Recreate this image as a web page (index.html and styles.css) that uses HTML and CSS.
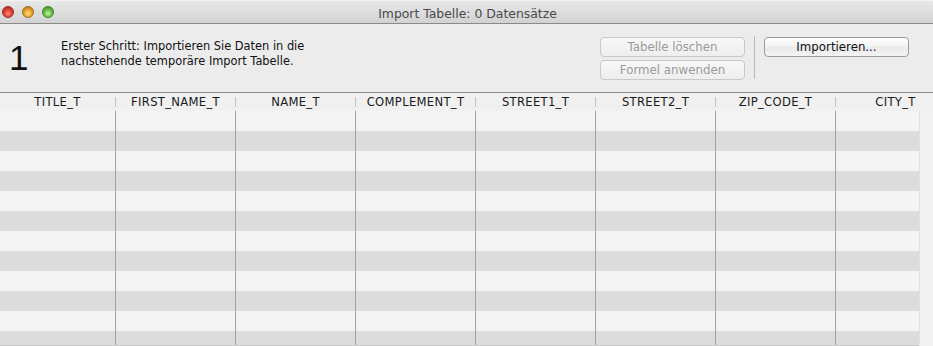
FILE: index.html
```html
<!DOCTYPE html>
<html lang="de">
<head>
<meta charset="utf-8">
<title>Import Tabelle</title>
<link rel="stylesheet" href="styles.css">
</head>
<body>
<div class="window">
  <div class="titlebar">
    <div class="lights">
      <span class="light red"></span>
      <span class="light yellow"></span>
      <span class="light green"></span>
    </div>
    <div class="title">Import Tabelle: 0 Datensätze</div>
  </div>
  <div class="toolbar">
    <div class="step">1</div>
    <div class="desc">Erster Schritt: Importieren Sie Daten in die<br>nachstehende temporäre Import Tabelle.</div>
    <div class="btncol">
      <button class="btn disabled">Tabelle löschen</button>
      <button class="btn disabled">Formel anwenden</button>
    </div>
    <div class="vsep"></div>
    <div class="btncol">
      <button class="btn">Importieren...</button>
    </div>
  </div>
  <div class="table">
    <div class="thead">
      <div class="th first">TITLE_T</div><div class="hdiv"></div>
      <div class="th">FIRST_NAME_T</div><div class="hdiv"></div>
      <div class="th">NAME_T</div><div class="hdiv"></div>
      <div class="th">COMPLEMENT_T</div><div class="hdiv"></div>
      <div class="th">STREET1_T</div><div class="hdiv"></div>
      <div class="th">STREET2_T</div><div class="hdiv"></div>
      <div class="th">ZIP_CODE_T</div><div class="hdiv"></div>
      <div class="th">CITY_T</div>
    </div>
    <div class="tbody">
      <div class="rows">
        <div class="row"><div class="td first"></div><div class="td"></div><div class="td"></div><div class="td"></div><div class="td"></div><div class="td"></div><div class="td"></div><div class="td"></div></div>
        <div class="row alt"><div class="td first"></div><div class="td"></div><div class="td"></div><div class="td"></div><div class="td"></div><div class="td"></div><div class="td"></div><div class="td"></div></div>
        <div class="row"><div class="td first"></div><div class="td"></div><div class="td"></div><div class="td"></div><div class="td"></div><div class="td"></div><div class="td"></div><div class="td"></div></div>
        <div class="row alt"><div class="td first"></div><div class="td"></div><div class="td"></div><div class="td"></div><div class="td"></div><div class="td"></div><div class="td"></div><div class="td"></div></div>
        <div class="row"><div class="td first"></div><div class="td"></div><div class="td"></div><div class="td"></div><div class="td"></div><div class="td"></div><div class="td"></div><div class="td"></div></div>
        <div class="row alt"><div class="td first"></div><div class="td"></div><div class="td"></div><div class="td"></div><div class="td"></div><div class="td"></div><div class="td"></div><div class="td"></div></div>
        <div class="row"><div class="td first"></div><div class="td"></div><div class="td"></div><div class="td"></div><div class="td"></div><div class="td"></div><div class="td"></div><div class="td"></div></div>
        <div class="row alt"><div class="td first"></div><div class="td"></div><div class="td"></div><div class="td"></div><div class="td"></div><div class="td"></div><div class="td"></div><div class="td"></div></div>
        <div class="row"><div class="td first"></div><div class="td"></div><div class="td"></div><div class="td"></div><div class="td"></div><div class="td"></div><div class="td"></div><div class="td"></div></div>
        <div class="row alt"><div class="td first"></div><div class="td"></div><div class="td"></div><div class="td"></div><div class="td"></div><div class="td"></div><div class="td"></div><div class="td"></div></div>
        <div class="row"><div class="td first"></div><div class="td"></div><div class="td"></div><div class="td"></div><div class="td"></div><div class="td"></div><div class="td"></div><div class="td"></div></div>
        <div class="row alt last"><div class="td first"></div><div class="td"></div><div class="td"></div><div class="td"></div><div class="td"></div><div class="td"></div><div class="td"></div><div class="td"></div></div>
      </div>
      <div class="vscroll"></div>
    </div>
  </div>
</div>
</body>
</html>
```
FILE: styles.css
```css
html, body {
  margin: 0;
  padding: 0;
  background: #ececec;
}
.window {
  width: 933px;
  height: 346px;
  overflow: hidden;
  font-family: "DejaVu Sans", "Liberation Sans", sans-serif;
  background: #ececec;
  display: flex;
  flex-direction: column;
}
.titlebar {
  flex: none;
  border-top: 1px solid #f2f2f2;
  border-bottom: 1px solid #8a8a8a;
  box-sizing: border-box;
  height: 24px;
  background: linear-gradient(#e8e8e8, #d2d2d2);
  display: flex;
  align-items: center;
}
.lights {
  display: flex;
  gap: 8px;
  padding-left: 2px;
  width: 0;
}
.light {
  flex: none;
  width: 12px;
  height: 12px;
  border-radius: 50%;
  box-sizing: border-box;
}
.red {
  background: radial-gradient(circle at 50% 65%, #ff8a80 0%, #e0443a 45%, #a81c14 100%);
  border: 1px solid #9b2a24;
}
.yellow {
  background: radial-gradient(circle at 50% 65%, #ffe08a 0%, #eaa42c 45%, #a96a10 100%);
  border: 1px solid #a0701e;
}
.green {
  background: radial-gradient(circle at 50% 65%, #c8f5a0 0%, #6cc04a 45%, #367f1c 100%);
  border: 1px solid #3f7d2a;
}
.title {
  flex: 1;
  text-align: center;
  font-size: 12.4px;
  color: #4a4a4a;
  padding-top: 2px;
}
.toolbar {
  height: 69px;
  flex: none;
  box-sizing: border-box;
  border-bottom: 1px solid #8c8c8c;
  display: flex;
  align-items: flex-start;
  padding-top: 13px;
}
.step {
  width: 52px;
  padding-left: 9px;
  box-sizing: content-box;
  font-family: "Liberation Sans", sans-serif;
  font-size: 35px;
  line-height: 40px;
  margin-top: 1px;
  color: #111;
  flex: none;
}
.desc {
  width: 539px;
  flex: none;
  font-size: 11.4px;
  line-height: 15px;
  color: #111;
  padding-top: 2px;
}
.btncol {
  display: flex;
  flex-direction: column;
  gap: 3px;
  flex: none;
}
.btn {
  width: 145px;
  height: 20px;
  box-sizing: border-box;
  border: 1px solid #9c9c9c;
  border-radius: 4px;
  background: linear-gradient(#ffffff, #f1f1f1 50%, #e9e9e9 51%, #f4f4f4);
  font-family: "DejaVu Sans", sans-serif;
  font-size: 11.8px;
  color: #111;
  padding: 0;
  margin: 0;
}
.btn.disabled {
  border-color: #c9c9c9;
  color: #9a9a9a;
  background: linear-gradient(#f8f8f8, #eeeeee);
}
.vsep {
  width: 1px;
  height: 43px;
  background: #b9b9b9;
  margin: -1px 9px 0 9px;
  flex: none;
}
.table {
  flex: 1;
  display: flex;
  flex-direction: column;
  min-height: 0;
}
.thead {
  height: 18px;
  flex: none;
  display: flex;
  align-items: center;
  background: #f0f0f0;
  overflow: hidden;
  white-space: nowrap;
}
.th {
  flex: none;
  width: 119px;
  text-align: center;
  font-size: 11.6px;
  letter-spacing: 0.3px;
  color: #1a1a1a;
  line-height: 16px;
}
.th.first {
  width: 115px;
}
.hdiv {
  flex: none;
  width: 1px;
  height: 10px;
  background: #c4c4c4;
}
.tbody {
  flex: 1;
  display: flex;
  min-height: 0;
  overflow: hidden;
}
.rows {
  width: 919px;
  flex: none;
  overflow: hidden;
}
.row {
  display: flex;
  height: 20px;
  background: #f4f4f4;
}
.row.alt {
  background: #dcdcdc;
}
.row.last {
  height: 14px;
  border-bottom: 1px solid #c9c9c9;
}
.td {
  flex: none;
  width: 119px;
  border-right: 1px solid #a3a3a3;
}
.td.first {
  width: 115px;
}
.vscroll {
  flex: 1;
  background: #f3f3f3;
  border-left: 1px solid #e0e0e0;
}
```
